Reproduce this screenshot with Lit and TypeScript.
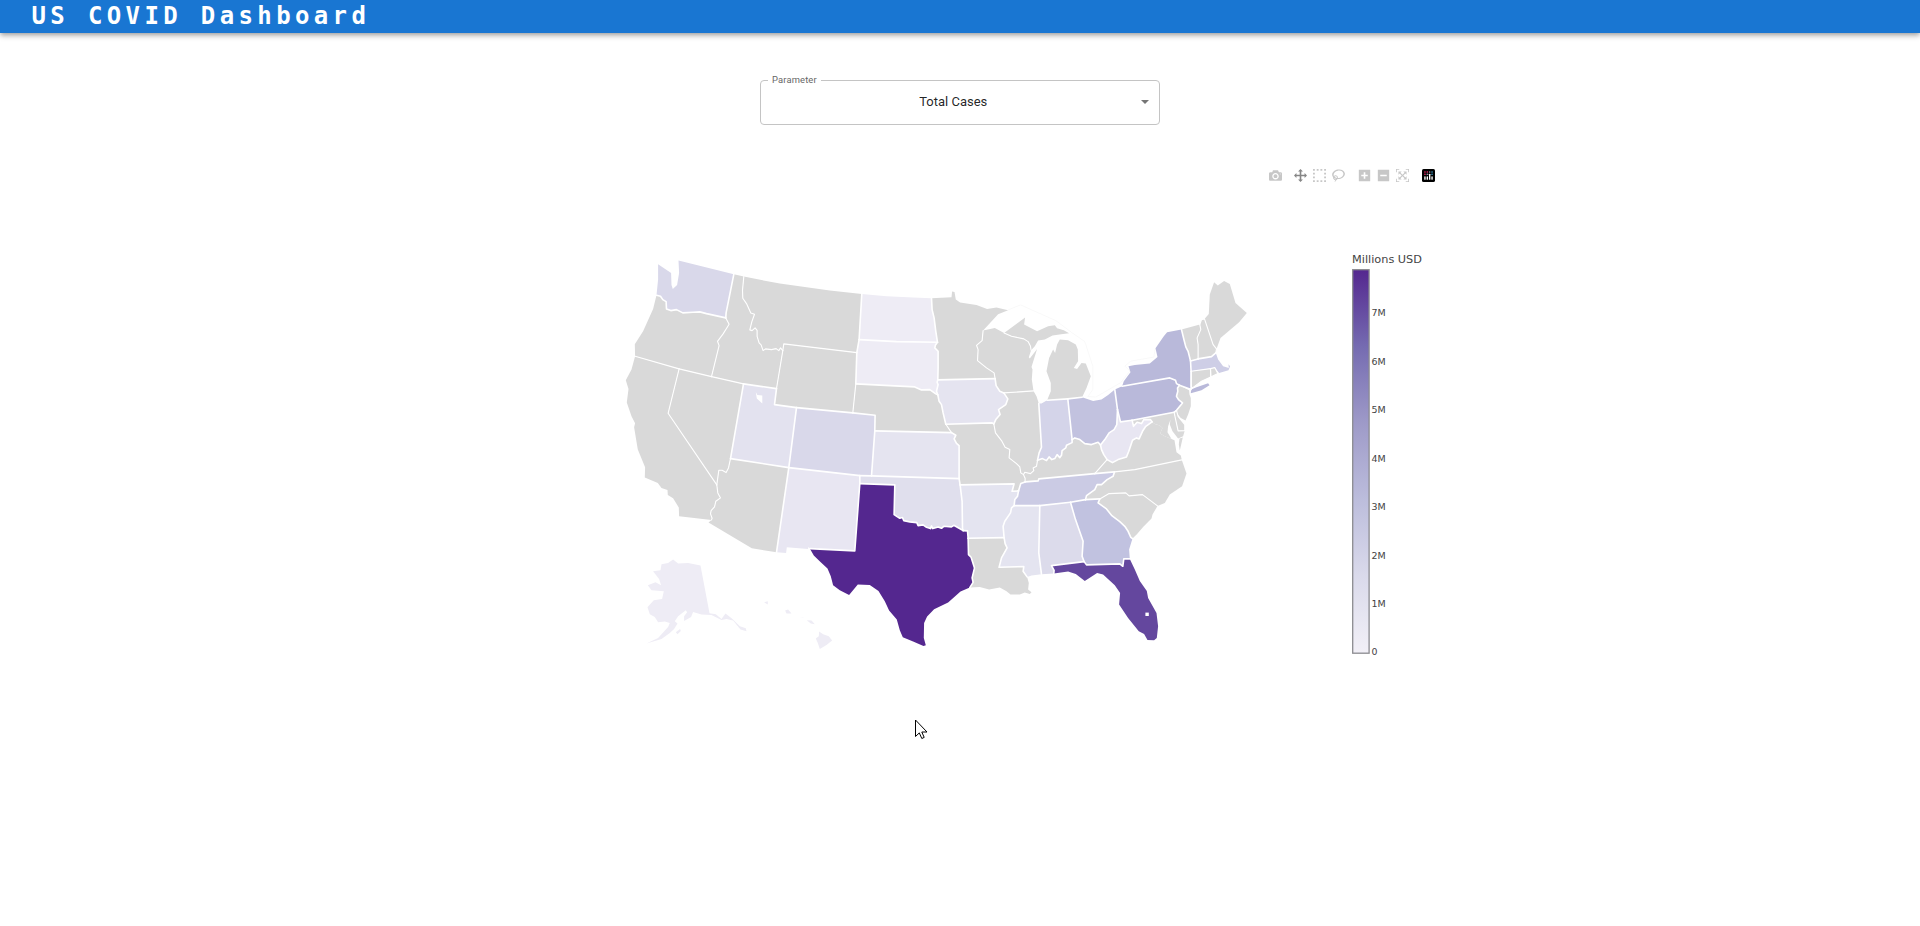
import { LitElement, html, svg, css } from 'lit';
import { customElement } from 'lit/decorators.js';

// Survey sheets: every arc is digitised in thirds of a pixel from its sheet's origin.
const SHEETS: Record<string, [number, number]> = {
  E: [615, 250], F: [780, 270], G: [920, 280], H: [1020, 370],
  I: [1080, 270], J: [780, 460], K: [630, 540], L: [1040, 450],
};

// Shared borders and coasts. A letter switches sheet, numbers are points.
const ARCS: Record<string, string> = {
  wa_coast: 'E 357,74 191,33 193,70 187,106 174,118 170,106 169,70 130,44 130,90 125,137',
  wa_or: 'E 125,137 137,140 144,150 154,156 155,178 168,183 185,180 204,190 235,188 255,187 275,192 333,205',
  wa_id: 'E 333,205 334,190 357,74',
  or_coast: 'E 125,137 115,178 85,245 60,284 61,320',
  or_ca: 'E 61,320 193,358',
  or_nv: 'E 193,358 290,381',
  or_id: 'E 290,381 313,288 308,275 325,253 343,224 333,205',
  id_n: 'E 357,74 387,81',
  id_mt: 'E 387,81 383,122 384,146 395,162 408,190 419,194 411,217 405,241 412,243 421,235 427,242 427,260 433,280 439,286 445,303 452,298 470,300 484,297 492,303 497,295 504,303',
  id_wy: 'E 504,303 485,417',
  id_ut: 'E 485,417 386,403',
  id_nv: 'E 386,403 290,381',
  wy_mt: 'E 504,303 507,283 F 231,249',
  mt_sd: 'F 231,249 238,210',
  mt_nd: 'F 238,210 246,73',
  mt_n: 'F 246,73 150,63 0,42 E 387,81',
  wy_sd: 'F 231,249 228,343',
  wy_ne: 'F 228,343 219,430',
  wy_co: 'F 219,430 50,414',
  wy_ut: 'F 50,414 E 479,465 485,417',
  ut_co: 'F 50,414 E 522,654',
  ut_az: 'E 522,654 347,627',
  ut_nv: 'E 347,627 386,403',
  nv_ca: 'E 193,358 160,491 306,706',
  nv_az: 'E 306,706 312,662 322,662 334,669 341,655 347,627',
  ca_coast: 'E 61,320 50,360 33,392 41,418 36,459 50,500 61,521 58,533 69,600 91,653 90,684 129,700 140,715 158,721 159,736 175,746 192,774 193,800 290,811',
  ca_az: 'E 306,706 309,730 317,745 303,755 299,772 289,783 287,793 292,806 290,811',
  az_s: 'E 290,811 281,819 411,896 485,908',
  az_nm: 'E 485,908 522,654',
  co_nm: 'E 522,654 J 240,48',
  co_ok: 'J 240,48 275,49',
  co_ks: 'J 275,49 F 285,484',
  co_ne: 'F 285,484 286,437 219,430',
  nm_s: 'E 485,908 514,910 516,893 580,898 J 85,262 90,267',
  nm_tx: 'J 90,267 225,274 240,72',
  nm_ok: 'J 240,72 240,48',
  tx_ok: 'J 240,72 345,76 343,165 352,171 360,176 368,174 372,183 390,187 411,189 415,198 430,196 440,203 452,207 455,199 459,207 475,202 485,206 492,200 515,202 522,197 538,206 550,213',
  tx_ar: 'J 550,213 563,214 565,236',
  tx_la: 'J 565,236 566,285 574,293 584,325 577,355 580,368 570,384',
  tx_gulf: 'J 570,384 542,396 505,429 463,449 442,471 433,490 432,535 438,557 431,559 400,546 369,533 360,512 351,480 328,453 315,425 296,394 270,376 234,375 208,406 180,392 160,377 153,350 143,327 122,307 102,288 90,267',
  ok_ks: 'J 275,49 538,57',
  ok_mo: 'J 538,57 541,76',
  ok_ar: 'J 541,76 547,125 548,207 550,213',
  ks_mo: 'J 538,57 F 538,528 530,521 523,508 528,497 515,489',
  ks_ne: 'F 285,484 515,489',
  ne_mo: 'F 515,489 498,464',
  ne_ia: 'F 498,464 490,430 485,405 478,395 474,376',
  ne_sd: 'F 474,376 468,373 450,360 425,361 405,352 228,343',
  sd_ia: 'F 474,376 470,365 475,345 472,338 474,331',
  sd_mn: 'F 474,331 475,295 475,245 465,235 467,226 473,218',
  sd_nd: 'F 238,210 350,216 473,218',
  nd_mn: 'F 473,218 468,185 463,145 457,120 455,86',
  nd_n: 'F 455,86 400,84 320,80 246,73',
  mn_n: 'F 455,86 515,83 517,66 524,67 528,90 541,99 590,106 G 202,88 230,84 265,92 235,104 190,153',
  mn_wi: 'G 190,153 187,183 170,197 175,210 173,243 200,265 223,280 226,297',
  mn_ia: 'F 474,331 G 226,297',
  ia_wi: 'G 226,297 229,318 240,335 252,340',
  ia_il: 'G 252,340 264,358 258,375 236,390 241,405 228,420 222,433',
  ia_mo: 'G 222,433 217,430 78,434',
  il_mo: 'G 222,433 227,460 245,483 256,503 270,510 268,535 290,552 300,562 303,580 311,585',
  wi_il: 'G 252,340 341,334',
  wi_lake: 'G 341,334 336,300 338,270 335,262 352,208 330,237 327,233 334,212',
  wi_up: 'G 334,212 332,200 325,186 312,178 275,170 253,160',
  wi_n: 'G 253,160 225,145 190,153',
  up_shore: 'G 253,160 316,114 313,135 352,155 385,140 405,137 412,146 432,152 448,161 430,163 398,168 375,180 355,183 345,200 334,212',
  mi_lower: 'G 487,353 500,325 513,290 498,252 485,250 472,268 462,265 475,245 474,210 468,195 445,182 420,180 412,195 406,220 400,210 388,235 380,275 393,310 393,335 382,362',
  mi_in: 'G 382,362 444,358',
  mi_oh: 'G 444,358 487,353',
  in_lake: 'G 357,372 365,372 382,362',
  in_il: 'G 357,372 365,503 358,520 353,542',
  il_lake: 'G 341,334 350,350 357,372',
  in_ky: 'H 53,272 68,267 80,273 88,262 96,270 105,267 112,255 120,264 125,257 127,243 138,235 140,227 157,219 157,210',
  in_oh: 'H 157,210 144,88',
  oh_lake: 'H 187,83 220,94 245,90 265,76 285,60',
  oh_pa: 'H 285,60 293,120',
  oh_wv: 'H 293,120 291,165 283,180 268,190 255,210 242,226',
  oh_ky: 'H 242,226 235,218 215,225 195,222 180,210 165,205 157,210',
  pa_lake: 'H 285,60 307,50',
  pa_ny: 'H 307,50 450,25 467,32 470,42 479,47',
  pa_nj: 'H 479,47 473,55 474,65 470,80 476,90 488,100 470,122 463,128',
  pa_md: 'H 463,128 337,152',
  pa_wv: 'H 337,152 302,157 293,120',
  il_ky: 'H 53,272 50,290 40,295 42,303 32,312 15,308 11,315',
  ky_mo: 'H 11,315 16,326 16,337',
  ky_tn: 'H 16,337 55,334 57,328 225,312',
  ky_va: 'H 225,312 262,270',
  ky_wv: 'H 262,270 252,255 245,240 242,226',
  tn_va: 'H 225,312 284,307',
  tn_nc: 'H 284,307 280,320 262,330 245,345 232,345 225,360 200,378 197,390',
  mo_tn: 'H 16,337 3,342 -4,364',
  mo_ar: 'J 541,76 703,73 697,95 716,94',
  ar_tn: 'H -4,364 -7,380 -15,390 -17,408',
  ar_ms: 'J 703,138 695,145 692,160 675,185 670,200 673,234',
  ar_la: 'J 565,236 673,234',
  la_ms: 'J 673,234 676,252 682,265 665,295 658,323 732,321 730,335 742,352',
  la_coast: 'J 742,352 747,370 745,390 755,398 750,403 735,399 720,405 692,405 680,395 660,384 628,390 600,382 570,384',
  tn_ms: 'H -17,408 60,408',
  tn_al: 'H 60,408 152,398',
  tn_ga: 'H 152,398 197,390',
  ga_nc: 'H 197,390 240,388',
  ms_coast: 'J 742,352 755,348 785,344',
  ms_al: 'H 65,614 57,550 60,408',
  al_coast: 'H 102,612 65,614',
  al_fl: 'H 193,576 95,588 103,602 102,612',
  al_ga: 'H 152,398 167,450 190,515 187,560 193,576',
  ga_fl: 'H 330,568 312,568 309,590 300,583 200,586 193,576',
  ga_coast: 'H 338,507 328,540 330,568',
  ga_sc: 'H 240,388 235,400 260,418 275,437 300,456 315,470 325,485 333,503 338,507',
  sc_coast: 'H 413,409 398,435 395,447 370,472 352,493 338,507',
  nc_sc: 'H 413,409 368,375 328,379 318,370 268,372 240,388',
  nc_coast: 'H 486,271 500,312 487,350 450,375 435,400 413,409',
  va_nc: 'H 284,307 345,300 486,271',
  va_coast: 'H 397,157 405,163 420,168 428,175 421,192 435,200 455,208 464,212 470,248 483,258 486,271',
  va_wv: 'H 262,270 278,279 295,270 320,262 327,245 338,212 350,205 358,208 368,185 378,170 397,157',
  wv_md: 'H 397,157 392,150 372,150 365,162 352,158 341,170 337,152',
  fl_coast: 'L 270,328 285,360 300,394 321,424 325,445 350,490 355,530 351,565 343,572 323,571 313,553 297,545 265,505 238,465 241,430 225,407 190,375 172,370 135,394 108,373 85,366 42,372',
  md_bay: 'H 463,128 475,184 495,183 490,200 475,207 458,185 450,165 452,150 445,170 443,188 455,208 435,200 421,192 428,175 420,168 405,163 397,157',
  de: 'H 463,128 470,122 475,140 495,165 495,183 475,184 463,128',
  va_shore: 'H 489,204 480,243 477,225 479,207 489,204',
  nj_coast: 'H 479,47 508,62 509,75 513,85 513,110 505,135 497,153 483,145 466,125',
  ny_lake: 'I 127,350 132,335 152,308 146,290 165,286 210,282 233,262 227,236 252,200 262,188 305,180',
  ny_vt: 'I 305,180 313,212 318,232 325,245 332,274',
  ny_ma: 'I 332,274 334,305',
  ny_sea: 'I 334,305 334,360 299,347',
  vt_n: 'I 305,180 360,165',
  vt_nh: 'I 360,165 363,180 352,205 355,225 355,268',
  vt_ma: 'I 355,268 332,274',
  nh_ma: 'I 355,268 395,261 408,250',
  nh_me: 'I 360,165 365,150 374,148 400,225 410,238 408,250',
  me: 'I 374,148 387,133 390,75 403,38 414,48 433,34 450,43 467,100 501,130 478,158 422,205 410,238 400,225 374,148',
  ma_sea: 'I 408,250 415,270 430,290 447,295 446,284 451,290 446,302 418,310 405,294',
  ma_ri: 'I 405,294 392,297',
  ma_ct: 'I 392,297 334,305',
  ct: 'I 334,305 392,297 393,322 365,335 338,355 334,350 334,305',
  ri: 'I 392,297 405,294 414,312 393,322 392,297',
  li: 'I 333,371 334,360 350,353 385,341 389,347 365,362 333,371',
  ak: 'K 130,60 145,72 175,70 212,78 239,221 258,224 275,238 287,222 308,238 330,260 348,266 350,275 332,270 310,243 290,238 275,241 245,226 215,225 190,217 184,232 163,244 163,230 172,218 168,212 145,230 135,245 143,252 133,268 120,280 95,298 50,312 85,295 115,262 120,250 105,246 85,248 75,232 60,224 53,203 72,182 97,178 102,155 65,152 54,137 77,128 94,137 88,118 70,95 92,92 95,74 115,70 130,60',
  ak2: 'K 138,278 151,268 153,274 143,284 138,278',
  hi1: 'K 403,188 414,185 414,195 403,188',
  hi2: 'K 466,213 475,210 485,222 470,222 466,213',
  hi3: 'K 531,242 545,243 555,254 543,252 531,242',
  hi4: 'K 568,276 580,284 597,290 607,303 590,316 570,328 564,310 558,297 567,290 568,276',
  hi5: 'K 508,232 521,233 521,234 508,232',
};

// Borders that belong to a single ring but still separate two areas.
const LONE_BORDERS = ['nh_me', 'ny_sea', 'ct', 'ri', 'de'];

const NO_DATA = '#d9d9d9';

interface Area { name: string; fill: string; rings: string[] }
const area = (name: string, fill: string, ...rings: string[]): Area => ({ name, fill, rings });

const AREAS: Area[] = [
  area('Oregon', NO_DATA, 'wa_or or_id or_nv or_ca or_coast'),
  area('California', NO_DATA, 'or_ca nv_ca ca_az ca_coast'),
  area('Nevada', NO_DATA, 'or_nv id_nv ut_nv nv_az nv_ca'),
  area('Idaho', NO_DATA, 'id_n id_mt id_wy id_ut id_nv or_id wa_id'),
  area('Montana', NO_DATA, 'id_mt wy_mt mt_sd mt_nd mt_n'),
  area('Wyoming', NO_DATA, 'wy_mt wy_sd wy_ne wy_co wy_ut id_wy'),
  area('Arizona', NO_DATA, 'ut_az az_nm az_s ca_az nv_az'),
  area('Nebraska', NO_DATA, 'ne_sd ne_ia ne_mo ks_ne co_ne wy_ne'),
  area('Minnesota', NO_DATA, 'mn_n mn_wi mn_ia sd_mn nd_mn'),
  area('Wisconsin', NO_DATA, 'mn_wi ia_wi wi_il wi_lake wi_up wi_n'),
  area('Michigan', NO_DATA, 'up_shore wi_up', 'mi_lower mi_in mi_oh'),
  area('Illinois', NO_DATA, 'wi_il il_lake in_il il_ky il_mo ia_il'),
  area('Missouri', NO_DATA, 'ia_mo il_mo ky_mo mo_tn mo_ar ok_mo ks_mo ne_mo'),
  area('Kentucky', NO_DATA, 'in_ky oh_ky ky_wv ky_va ky_tn ky_mo il_ky'),
  area('Louisiana', NO_DATA, 'ar_la la_ms la_coast tx_la'),
  area('Virginia', NO_DATA, 'va_wv va_coast va_nc tn_va ky_va', 'va_shore'),
  area('North Carolina', NO_DATA, 'va_nc nc_coast nc_sc ga_nc tn_nc'),
  area('South Carolina', NO_DATA, 'nc_sc ga_sc sc_coast'),
  area('Maryland', NO_DATA, 'md_bay wv_md pa_md'),
  area('Delaware', NO_DATA, 'de'),
  area('New Jersey', NO_DATA, 'nj_coast pa_nj'),
  area('Vermont', NO_DATA, 'vt_n vt_nh vt_ma ny_vt'),
  area('New Hampshire', NO_DATA, 'nh_me nh_ma vt_nh'),
  area('Maine', NO_DATA, 'me'),
  area('Connecticut', NO_DATA, 'ct'),
  area('Rhode Island', NO_DATA, 'ri'),
  area('Washington', '#d9d8ea', 'wa_coast wa_or wa_id'),
  area('Utah', '#e3e2ef', 'id_ut wy_ut ut_co ut_az ut_nv'),
  area('Colorado', '#d9d8ea', 'wy_co ut_co co_nm co_ok co_ks co_ne'),
  area('New Mexico', '#e8e6f2', 'co_nm nm_ok nm_tx nm_s az_nm'),
  area('North Dakota', '#eeecf5', 'nd_n nd_mn sd_nd mt_nd'),
  area('South Dakota', '#eeecf5', 'sd_nd sd_mn sd_ia ne_sd wy_sd mt_sd'),
  area('Kansas', '#e5e4f0', 'ks_ne ks_mo ok_ks co_ks'),
  area('Oklahoma', '#e0dfed', 'co_ok ok_ks ok_mo ok_ar tx_ok nm_ok'),
  area('Iowa', '#e5e4f0', 'mn_ia ia_wi ia_il ia_mo ne_ia sd_ia'),
  area('Arkansas', '#e4e4f0', 'mo_ar ar_tn ar_ms ar_la tx_ar ok_ar'),
  area('Mississippi', '#e4e4f0', 'tn_ms ms_al ms_coast la_ms ar_ms'),
  area('Alabama', '#dcdbeb', 'tn_al al_ga al_fl al_coast ms_al'),
  area('Tennessee', '#cbcbe4', 'ky_tn tn_va tn_nc tn_ga tn_al tn_ms ar_tn mo_tn'),
  area('Georgia', '#c1c2e0', 'tn_ga ga_nc ga_sc ga_coast ga_fl al_ga'),
  area('Indiana', '#d4d4e9', 'in_lake mi_in in_oh in_ky in_il'),
  area('Ohio', '#c2c2df', 'mi_oh oh_lake oh_pa oh_wv oh_ky in_oh'),
  area('West Virginia', '#e8e6f2', 'oh_wv ky_wv va_wv wv_md pa_wv'),
  area('Pennsylvania', '#b9b9da', 'pa_lake pa_ny pa_nj pa_md pa_wv oh_pa'),
  area('New York', '#b9b9da', 'ny_lake ny_vt ny_ma ny_sea pa_ny', 'li'),
  area('Massachusetts', '#cecee6', 'vt_ma nh_ma ma_sea ma_ri ma_ct ny_ma'),
  area('Alaska', '#eeecf5', 'ak', 'ak2'),
  area('Hawaii', '#eeecf5', 'hi1', 'hi2', 'hi3', 'hi4', 'hi5'),
  area('Florida', '#64479e', 'fl_coast al_fl ga_fl'),
  area('Texas', '#54278f', 'tx_ok tx_ar tx_la tx_gulf nm_tx'),
];

type Point = [number, number];

function readArc(name: string): Point[] {
  let origin: [number, number] = [0, 0];
  const out: Point[] = [];
  for (const token of (ARCS[name] ?? '').split(' ')) {
    if (SHEETS[token]) origin = SHEETS[token];
    else if (token) {
      const [x, y] = token.split(',').map(Number);
      out.push([origin[0] + x / 3, origin[1] + y / 3]);
    }
  }
  return out;
}

const gap = (a: Point, b: Point) => Math.hypot(a[0] - b[0], a[1] - b[1]);
const trace = (pts: Point[]) => 'M' + pts.map(p => `${p[0].toFixed(1)} ${p[1].toFixed(1)}`).join('L');

// Joins the arcs of a ring, turning each one so it starts where the last one ended.
function ringPath(ring: string): string {
  const arcs = ring.split(' ').map(readArc);
  let pts = arcs[0];
  if (arcs.length > 1) {
    const next = arcs[1];
    const ends = [next[0], next[next.length - 1]];
    const near = (p: Point) => Math.min(...ends.map(e => gap(p, e)));
    if (near(pts[0]) < near(pts[pts.length - 1])) pts = [...pts].reverse();
  }
  for (const arc of arcs.slice(1)) {
    const last = pts[pts.length - 1];
    const flip = gap(last, arc[arc.length - 1]) < gap(last, arc[0]);
    pts = [...pts, ...(flip ? [...arc].reverse() : arc)];
  }
  return trace(pts) + 'Z';
}

const SHAPES = AREAS.map(a => ({ ...a, d: a.rings.map(ringPath).join('') }));

// A border is any arc used by two areas; it is heavier beside an area with data.
const BORDERS = Object.keys(ARCS).flatMap(name => {
  const users = AREAS.filter(a => a.rings.some(r => r.split(' ').includes(name)));
  if (users.length < 2 && !LONE_BORDERS.includes(name)) return [];
  return [{ d: trace(readArc(name)), heavy: users.some(u => u.fill !== NO_DATA) }];
});

const ICONS = {
  camera: { w: 1000, d: 'm500 450c-83 0-150-67-150-150 0-83 67-150 150-150 83 0 150 67 150 150 0 83-67 150-150 150z m400 150h-120c-16 0-34 13-39 29l-31 93c-6 15-23 28-40 28h-340c-16 0-34-13-39-28l-31-94c-6-15-23-28-40-28h-120c-55 0-100-45-100-100v-450c0-55 45-100 100-100h800c55 0 100 45 100 100v450c0 55-45 100-100 100z m-400-550c-138 0-250 112-250 250 0 138 112 250 250 250 138 0 250-112 250-250 0-138-112-250-250-250z m365 380c-19 0-35 16-35 35 0 19 16 35 35 35 19 0 35-16 35-35 0-19-16-35-35-35z' },
  pan: { w: 1000, d: 'm1000 350l-187 188 0-125-250 0 0 250 125 0-188 187-187-187 125 0 0-250-250 0 0 125-188-188 186-187 0 125 252 0 0-250-125 0 187-188 188 188-125 0 0 250 250 0 0-126 187 188z' },
  select: { w: 1000, d: 'm0 850l0-143 143 0 0 143-143 0z m286 0l0-143 143 0 0 143-143 0z m285 0l0-143 143 0 0 143-143 0z m286 0l0-143 143 0 0 143-143 0z m-857-286l0-143 143 0 0 143-143 0z m857 0l0-143 143 0 0 143-143 0z m-857-285l0-143 143 0 0 143-143 0z m857 0l0-143 143 0 0 143-143 0z m-857-286l0-143 143 0 0 143-143 0z m286 0l0-143 143 0 0 143-143 0z m285 0l0-143 143 0 0 143-143 0z m286 0l0-143 143 0 0 143-143 0z' },
  lasso: { w: 1031, d: 'm1018 538c-36 207-290 336-568 286-277-48-473-256-436-463 10-57 36-108 76-151-13-66 11-137 68-183 34-28 75-41 114-42l-55-70 0 0c-2-1-3-2-4-3-10-14-8-34 5-45 14-11 34-8 45 4 1 1 2 3 2 5l0 0 113 140c16 11 31 24 45 40 4 3 6 7 8 11 48-3 100 0 151 9 278 48 473 255 436 462z m-624-379c-80 14-149 48-197 96 42 42 109 47 156 9 33-26 47-66 41-105z m-187-74c-19 16-33 37-39 60 50-32 109-55 174-68-42-25-95-24-135 8z m360 75c-34-7-69-9-102-8 8 62-16 128-68 170-73 59-175 54-244-5-9 20-16 40-20 61-28 159 121 317 333 354s407-60 434-217c28-159-121-318-333-355z' },
  plus: { w: 875, d: 'm1 787l0-875 875 0 0 875-875 0z m687-500l-187 0 0-187-125 0 0 187-188 0 0 125 188 0 0 187 125 0 0-187 187 0 0-125z' },
  minus: { w: 875, d: 'm0 788l0-876 875 0 0 876-875 0z m688-500l-500 0 0 125 500 0 0-125z' },
  reset: { w: 1000, d: 'm250 850l-187 0-63 0 0-62 0-188 63 0 0 188 187 0 0 62z m688 0l-188 0 0-62 188 0 0-188 62 0 0 188 0 62-62 0z m-875-938l0 188-63 0 0-188 0-62 63 0 187 0 0 62-187 0z m875 188l0-188-188 0 0-62 188 0 62 0 0 62 0 188-62 0z m-125 188l-1 0-93-94-156 156 156 156 92-93 2 0 0 250-250 0 0-2 93-92-156-156-156 156 94 92 0 2-250 0 0-250 0 0 93 93 157-156-157-156-93 94 0 0 0-250 250 0 0 0-94 93 156 157 156-157-93-93 0 0 250 0 0 250z' },
};

@customElement('plot-toolbar')
export class PlotToolbar extends LitElement {
  static styles = css`
    :host { display: flex; justify-content: flex-end; gap: 12.8px; height: 13px; }
    .group { display: flex; gap: 6px; }
    .icon { display: block; width: 13px; height: 13px; fill: #c7c7c7; }
    .active { fill: #868686; }
  `;

  private icon(name: keyof typeof ICONS, cls = 'icon') {
    const { w, d } = ICONS[name];
    return html`<svg class=${cls} viewBox="0 0 ${w} 1000" preserveAspectRatio="xMidYMid">
      <path transform="matrix(1 0 0 -1 0 850)" d=${d}></path></svg>`;
  }

  render() {
    return html`
      <div class="group">${this.icon('camera')}</div>
      <div class="group">
        ${this.icon('pan', 'icon active')}${this.icon('select')}${this.icon('lasso')}
      </div>
      <div class="group">${this.icon('plus')}${this.icon('minus')}${this.icon('reset')}</div>
      <div class="group">
        <svg class="icon" viewBox="0 0 132 132">
          <rect width="132" height="132" rx="16" fill="#000"></rect>
          <g fill="#fff">
            <rect x="23" y="74" width="14" height="36" rx="6"></rect>
            <rect x="47" y="74" width="14" height="36" rx="6"></rect>
            <rect x="71" y="48" width="14" height="62" rx="6"></rect>
            <rect x="95" y="74" width="14" height="36" rx="6"></rect>
          </g>
          <g fill="#ff2c6d"><circle cx="30" cy="30" r="8"></circle><circle cx="30" cy="54" r="8"></circle><circle cx="54" cy="30" r="8"></circle></g>
          <g fill="#a3a8bd"><circle cx="54" cy="54" r="8"></circle><circle cx="78" cy="30" r="8"></circle></g>
          <g fill="#3fa7d6"><circle cx="102" cy="30" r="8"></circle><circle cx="102" cy="54" r="8"></circle></g>
        </svg>
      </div>`;
  }
}

@customElement('covid-map')
export class CovidMap extends LitElement {
  static styles = css`
    :host { display: block; }
    .plot { display: block; width: 960px; height: 480px; }
    .border { fill: none; stroke: #fff; stroke-width: 1.1; stroke-linejoin: round; stroke-linecap: round; }
    .heavy { stroke-width: 1.6; }
    .water { fill: none; stroke: #f3f3f3; stroke-width: 0.5; }
    .hole { fill: #fff; }
    .scale-title, .tick { font-family: "DejaVu Sans", Verdana, sans-serif; fill: #444; }
    .scale-title { font-size: 11px; }
    .tick { font-size: 9px; }
    .bar { fill: url(#purples); stroke: #8b8b90; stroke-width: 1.3; }
  `;

  render() {
    const stops = ['#54278f', '#756bb1', '#9e9ac8', '#bcbddc', '#dadaeb', '#f2f0f7'];
    return html`
      <svg class="plot" viewBox="480 220 960 480">
        <defs>
          <linearGradient id="purples" x1="0" y1="0" x2="0" y2="1">
            ${stops.map((c, i) => svg`<stop offset=${i / 5} stop-color=${c}></stop>`)}
          </linearGradient>
        </defs>
        <g transform="translate(-0.2 -0.4)">
          <path class="water" d="M1008 310.500L1020.700 305.300L1056 321L1072 333L1085 342L1093 366.500L1093 390L1088 397L1096 397.500L1121 383L1130 371.500L1125 366.500L1131 361.500L1154 357.500L1155.500 349"></path>
          ${SHAPES.map(s => svg`<path fill=${s.fill} d=${s.d} aria-label=${s.name}></path>`)}
          ${BORDERS.map(b => svg`<path class="border ${b.heavy ? 'heavy' : ''}" d=${b.d}></path>`)}
          <path class="hole" d="M756 392.300L757.500 395.300L762.500 396V404L757 399Z"></path>
          <rect class="hole" x="1145.600" y="613" width="3.400" height="3.400"></rect>
        </g>
        <text class="scale-title" x="1352" y="262.500" textLength="70" lengthAdjust="spacingAndGlyphs">Millions USD</text>
        <rect class="bar" x="1352.700" y="269.700" width="16.400" height="383.500"></rect>
        ${[0, 1, 2, 3, 4, 5, 6, 7].map(n => svg`
          <text class="tick" x="1371.500" y=${655.4 - n * 48.45} textLength=${n ? 14.2 : 6}
            lengthAdjust="spacingAndGlyphs">${n ? `${n}M` : '0'}</text>`)}
      </svg>`;
  }
}

@customElement('app-root')
export class AppRoot extends LitElement {
  static styles = css`
    :host {
      display: flex; flex-direction: column; height: 926px; overflow: hidden;
      background: #fff; font-family: Roboto, sans-serif; position: relative;
    }
    .header {
      flex: none; height: 33px; padding-left: 31.5px; background: #1976d2; color: #fff;
      box-shadow: 0 2px 4px -1px rgba(0,0,0,.2), 0 4px 5px 0 rgba(0,0,0,.14), 0 1px 6px 0 rgba(0,0,0,.12);
    }
    .title {
      margin: 0; font: bold 24px/32px "DejaVu Sans Mono", monospace; letter-spacing: 4.37px;
    }
    .main { flex: 1; display: flex; flex-direction: column; align-items: center; padding-top: 41px; }
    .field {
      box-sizing: border-box; width: 400px; height: 51px; margin: 0; padding: 0 10.5px 0 7px;
      border: 1px solid #c4c4c4; border-radius: 4px;
    }
    .legend { padding: 0 4px; font-size: 9.4px; line-height: 12px; color: #666; letter-spacing: .15px; }
    .value {
      display: flex; align-items: center; margin-top: 8px;
      font-size: 13px; line-height: 16px; color: rgba(0,0,0,.87);
    }
    .label { flex: 1; text-align: center; padding-right: 2px; }
    .arrow { border: 4.5px solid transparent; border-top-color: #757575; border-bottom: 0; }
    .chart { width: 960px; padding-top: 44px; }
    .tools { padding: 0 5px 38px 0; }
    .cursor { position: absolute; left: 915px; top: 719px; width: 13px; height: 21px; }
  `;

  render() {
    return html`
      <header class="header"><h1 class="title">US COVID Dashboard</h1></header>
      <main class="main">
        <fieldset class="field">
          <legend class="legend">Parameter</legend>
          <div class="value"><span class="label">Total Cases</span><span class="arrow"></span></div>
        </fieldset>
        <section class="chart">
          <plot-toolbar class="tools"></plot-toolbar>
          <covid-map></covid-map>
        </section>
      </main>
      <svg class="cursor" viewBox="0 0 13 21">
        <path d="M.5 1V17.500L4.300 13.900L6.800 19.500L9.200 18.400L6.800 13H12Z" fill="#fff" stroke="#000" stroke-width="1"></path>
      </svg>`;
  }
}
